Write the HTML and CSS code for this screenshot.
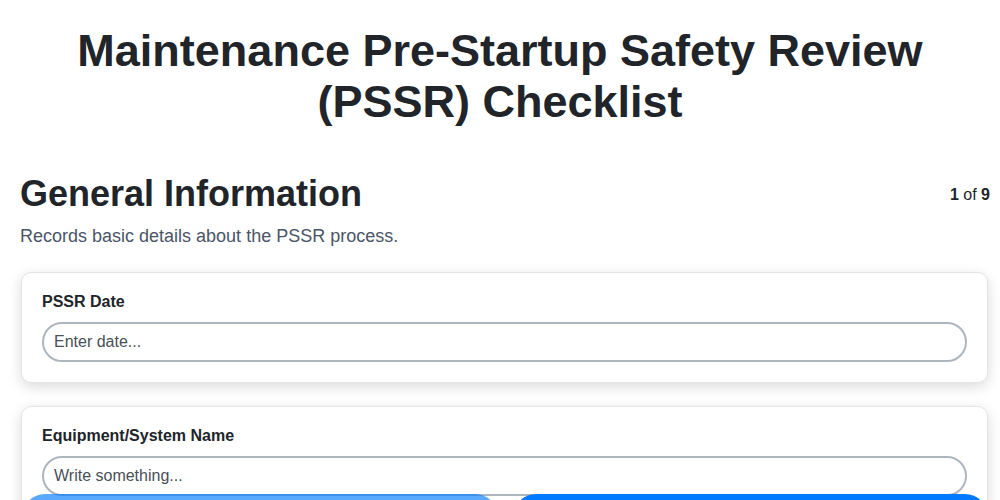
FILE: index.html
```html
<!DOCTYPE html>
<html lang="en">
<head>
    <meta charset="UTF-8">
    <meta name="viewport" content="width=device-width, initial-scale=1.0">
    <title>PSSR Checklist</title>
    <link rel="stylesheet" href="styles.css">
</head>
<body>
    <div class="page">
        <h1>Maintenance Pre-Startup Safety Review (PSSR) Checklist</h1>

        <div class="section-head">
            <h2>General Information</h2>
            <div class="step"><b>1</b> of <b>9</b></div>
        </div>
        <p class="section-desc">Records basic details about the PSSR process.</p>

        <div class="card">
            <label for="pssrDate">PSSR Date</label>
            <input type="text" id="pssrDate" placeholder="Enter date...">
        </div>

        <div class="card">
            <label for="equipName">Equipment/System Name</label>
            <input type="text" id="equipName" placeholder="Write something...">
        </div>
    </div>

    <!-- step navigation, pinned to the bottom edge -->
    <div class="nav-bar">
        <button class="nav-btn prev" aria-label="Previous" disabled></button>
        <button class="nav-btn next" aria-label="Next"></button>
    </div>
</body>
</html>
```

FILE: styles.css
```css
body { margin: 0; font-family: "Liberation Sans", Arial, sans-serif; color: #212529; background: #fff; }
.page { padding: 25px 10px 80px 20px; }
h1 { font-size: 45px; line-height: 51px; text-align: center; margin: 0 40px 45px 30px; font-weight: bold; }
.section-head { display: flex; align-items: center; justify-content: space-between; }
h2 { font-size: 36px; margin: 0; line-height: 1.2; }
.step { font-size: 16px; padding-top: 3px; }
.section-desc { font-size: 18px; color: #4a5568; margin: 11px 0 25px; }
.card {
    background: #fff;
    border: 1px solid #e2e4e8;
    border-radius: 10px;
    box-shadow: 0 4px 14px rgba(0, 0, 0, 0.14);
    padding: 20px;
    margin: 0 2px 23px 1px;
}
.card label { display: block; font-weight: bold; font-size: 16px; margin-bottom: 11px; }
.card input {
    display: block;
    box-sizing: border-box;
    width: 100%;
    height: 40px;
    padding: 0 10px;
    border: 2px solid #adb5bd;
    border-radius: 20px;
    font-family: inherit;
    font-size: 16px;
    color: #212529;
}
.card input::placeholder { color: #495057; }
.nav-bar { position: fixed; left: 0; right: 0; bottom: -40px; height: 46px; display: flex; gap: 15px; padding: 0 12px 0 22px; }
.nav-btn { flex: 1; border: none; border-radius: 24px; background: #007bff; }
.nav-btn.prev { opacity: 0.65; }
```
